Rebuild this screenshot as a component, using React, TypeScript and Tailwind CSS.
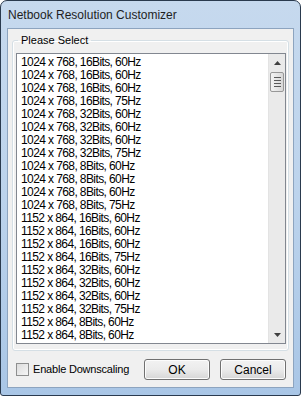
import { useState } from "react";

const modes = [
  "1024 x 768, 16Bits, 60Hz",
  "1024 x 768, 16Bits, 60Hz",
  "1024 x 768, 16Bits, 60Hz",
  "1024 x 768, 16Bits, 75Hz",
  "1024 x 768, 32Bits, 60Hz",
  "1024 x 768, 32Bits, 60Hz",
  "1024 x 768, 32Bits, 60Hz",
  "1024 x 768, 32Bits, 75Hz",
  "1024 x 768, 8Bits, 60Hz",
  "1024 x 768, 8Bits, 60Hz",
  "1024 x 768, 8Bits, 60Hz",
  "1024 x 768, 8Bits, 75Hz",
  "1152 x 864, 16Bits, 60Hz",
  "1152 x 864, 16Bits, 60Hz",
  "1152 x 864, 16Bits, 60Hz",
  "1152 x 864, 16Bits, 75Hz",
  "1152 x 864, 32Bits, 60Hz",
  "1152 x 864, 32Bits, 60Hz",
  "1152 x 864, 32Bits, 60Hz",
  "1152 x 864, 32Bits, 75Hz",
  "1152 x 864, 8Bits, 60Hz",
  "1152 x 864, 8Bits, 60Hz",
];

function ScrollBar() {
  return (
    <div className="flex w-[17px] flex-col bg-[#eaeaea] border-l border-[#e3e3e3]">
      <div className="flex h-[18px] items-center justify-center">
        <svg width="7" height="4" viewBox="0 0 7 4">
          <path d="M3.5 0 L7 4 L0 4 Z" fill="#404040" />
        </svg>
      </div>
      {/* thumb */}
      <div className="mx-[1px] flex h-[20px] flex-col items-center justify-center gap-[2px] rounded-[2px] border border-[#979797] bg-gradient-to-r from-[#f3f3f3] to-[#d8d8d8]">
        <div className="h-px w-[7px] bg-[#5a5a5a]" />
        <div className="h-px w-[7px] bg-[#5a5a5a]" />
        <div className="h-px w-[7px] bg-[#5a5a5a]" />
        <div className="h-px w-[7px] bg-[#5a5a5a]" />
      </div>
      <div className="flex-1" />
      <div className="flex h-[17px] items-center justify-center">
        <svg width="7" height="4" viewBox="0 0 7 4">
          <path d="M0 0 L7 0 L3.5 4 Z" fill="#404040" />
        </svg>
      </div>
    </div>
  );
}

function Button({ label }: { label: string }) {
  return (
    <button className="h-[21px] w-[66px] rounded-[3px] border border-[#707070] bg-gradient-to-b from-[#f2f2f2] via-[#ebebeb] to-[#d6d6d6] text-[12px] text-black shadow-[inset_0_0_0_1px_#fcfcfc]">
      {label}
    </button>
  );
}

export default function App() {
  const [downscale, setDownscale] = useState(false);

  return (
    <div
      className="flex h-[396px] w-[301px] flex-col rounded-t-[7px] rounded-b-[3px] border border-[#2a3a4e] bg-gradient-to-b from-[#c6d9ee] via-[#bcd3ec] to-[#a9c6e6]"
      style={{ fontFamily: '"Liberation Sans", Arial, sans-serif' }}
    >
      {/* Title bar */}
      <div className="flex h-[27px] items-center px-[7px] text-[12px] text-[#1e1e1e]">
        Netbook Resolution Customizer
      </div>

      {/* Client area */}
      <div className="mx-[6px] mb-[7px] flex flex-1 flex-col border border-[#8da4bf] bg-[#f0f0f0] px-[4px]">
        <fieldset className="mt-[4px] rounded-[3px] border border-[#d5dfe5] pb-[6px] pl-[3px] pr-[2px] shadow-[inset_0_0_0_1px_#ffffff]">
          <legend className="ml-[2px] px-[3px] text-[11px] leading-[14px] text-black">
            Please Select
          </legend>
          <div className="mt-[6px] flex h-[291px] overflow-hidden border border-[#828790] bg-white">
            <div className="flex-1 overflow-hidden pt-[2px] pl-[4px] text-[12px] leading-[13px] tracking-[-0.6px] text-black">
              {modes.map((m, i) => (
                <div key={i} className="h-[13px] whitespace-nowrap">
                  {m}
                </div>
              ))}
            </div>
            <ScrollBar />
          </div>
        </fieldset>

        {/* Bottom row */}
        <div className="mt-[8px] flex items-center pl-[4px] pr-[3px]">
          <button
            onClick={() => setDownscale(!downscale)}
            className="flex items-center gap-[4px] text-[11px] tracking-[-0.2px] text-black"
          >
            <span className="flex h-[13px] w-[13px] items-center justify-center border border-[#8e8f8f] bg-gradient-to-br from-[#dcdcdc] to-[#f6f6f6]">
              {downscale && <span className="text-[10px] leading-none">✓</span>}
            </span>
            Enable Downscaling
          </button>
          <div className="ml-auto flex gap-[10px]">
            <Button label="OK" />
            <Button label="Cancel" />
          </div>
        </div>
      </div>
    </div>
  );
}
